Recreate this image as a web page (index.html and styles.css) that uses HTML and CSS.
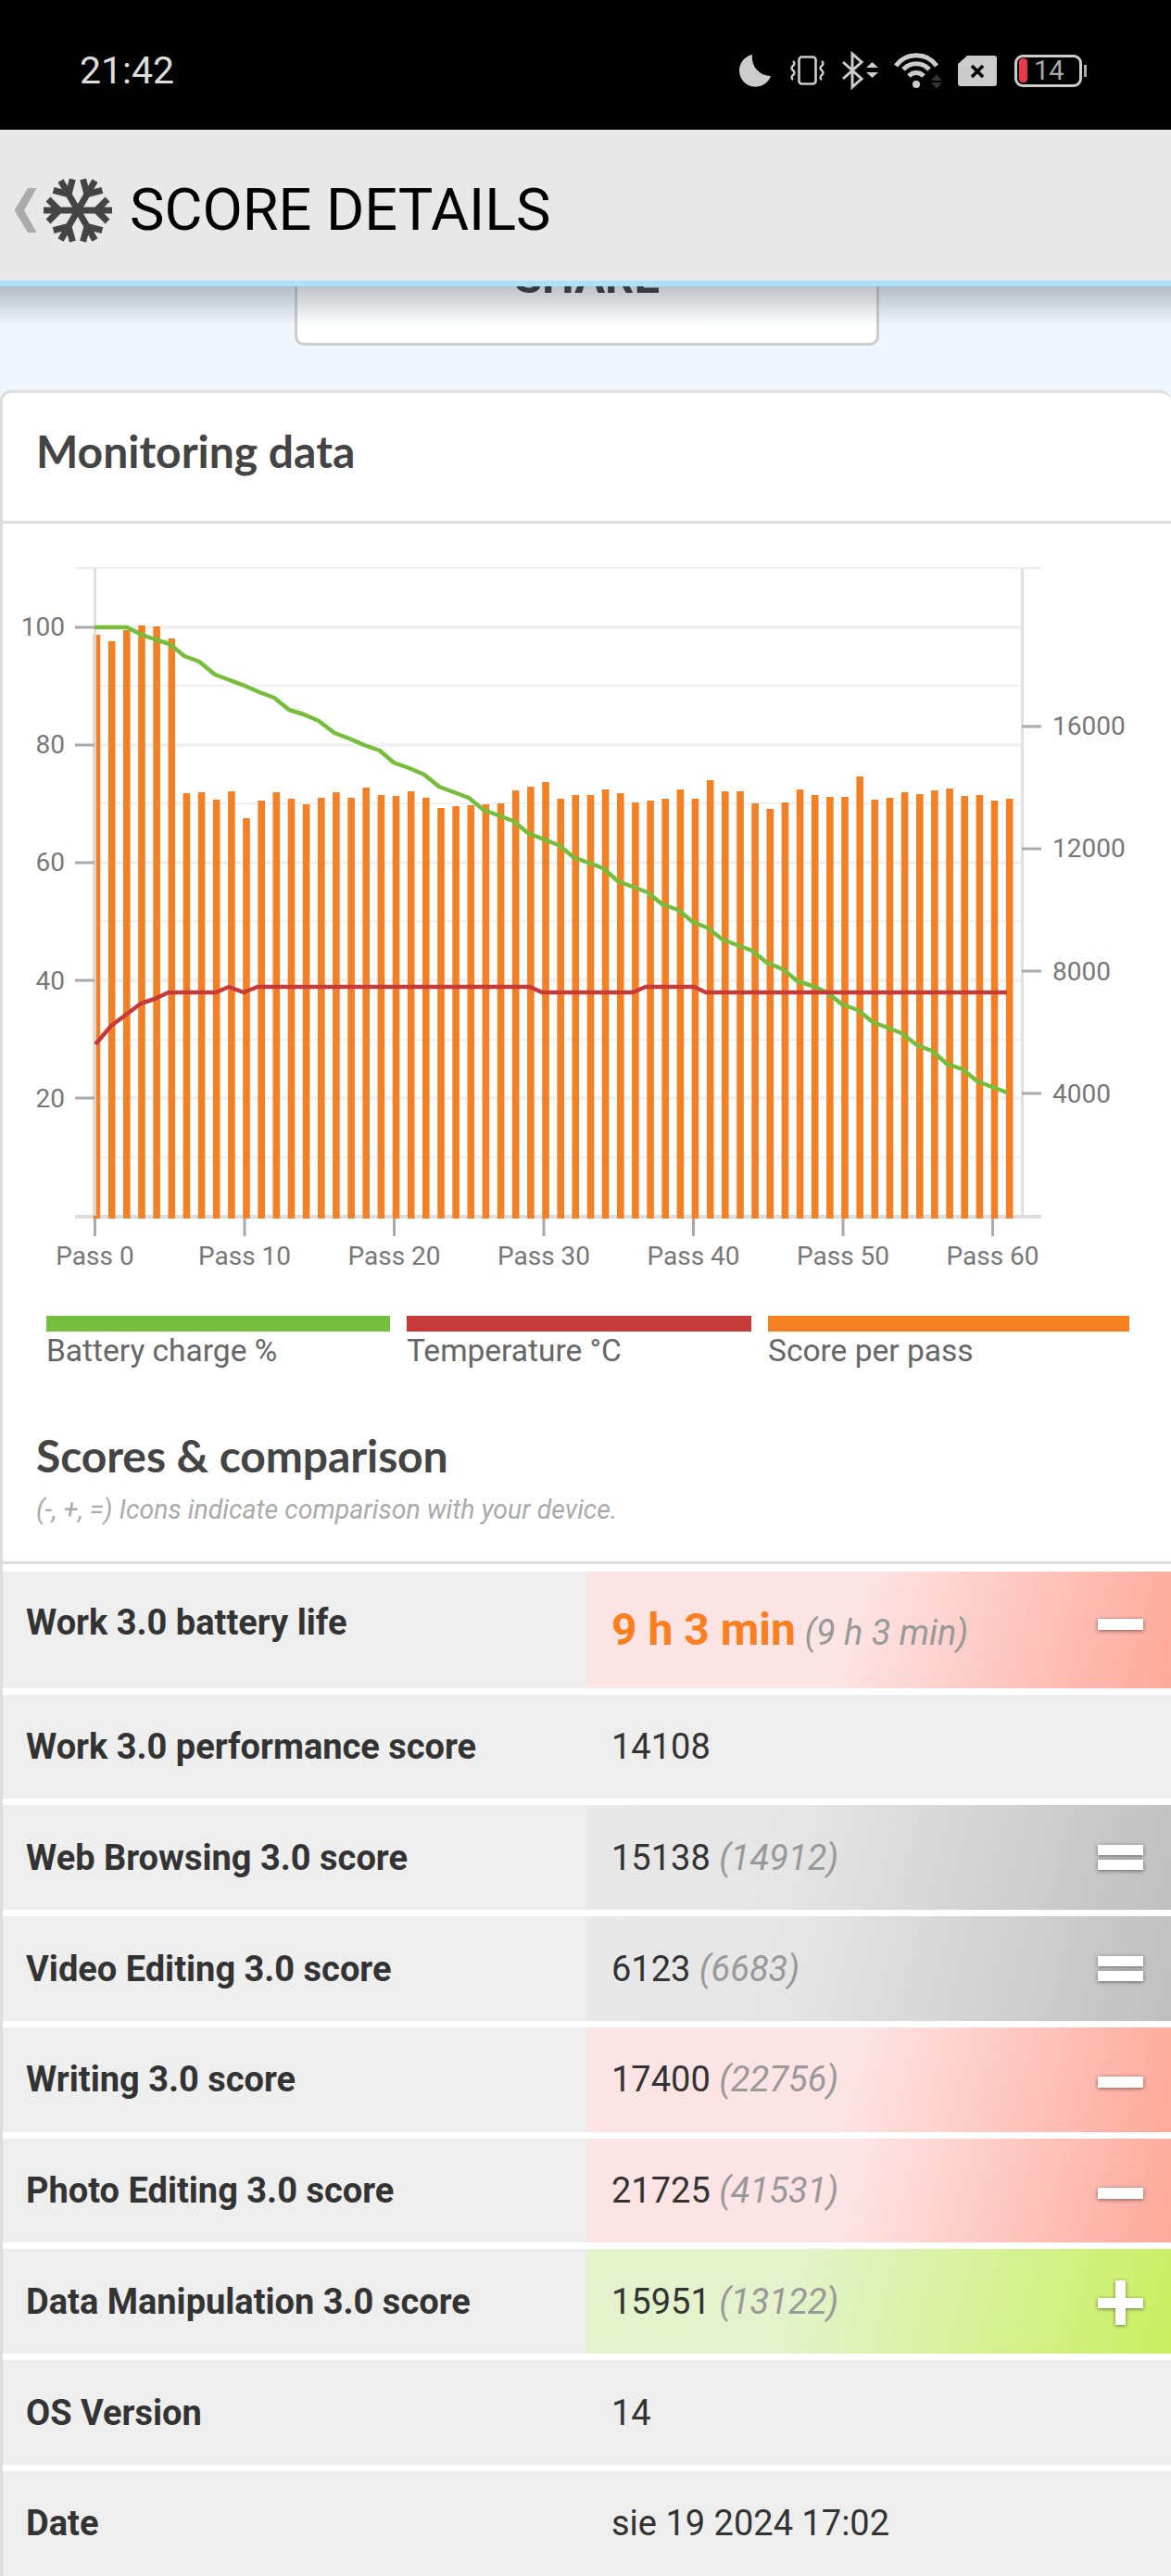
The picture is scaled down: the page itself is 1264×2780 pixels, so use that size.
FILE: index.html
```html
<!DOCTYPE html>
<html lang="en">
<head>
    <meta charset="UTF-8">
    <meta name="viewport" content="width=device-width, initial-scale=1.0">
    <title>Score details</title>
    <link rel="stylesheet" href="styles.css">
</head>
<body>
    <div class="status-bar">
        <span class="clock">21:42</span>
        <div class="status-icons">
            <svg width="37" height="34" viewBox="0 0 37 34"><path d="M15 0A17.5 17.5 0 1 0 35 23A20 20 0 0 1 15 0Z" fill="#ccc"/></svg>
            <svg width="37" height="32" viewBox="0 0 37 32"><rect x="9.5" y="1.5" width="18" height="29" rx="3" fill="none" stroke="#ccc" stroke-width="2.6"/><path d="M3 6q3 2.500 0 5q-3 2.500 0 5q3 2.500 0 5q-3 2.500 0 5M34 6q3 2.500 0 5q-3 2.500 0 5q3 2.500 0 5q-3 2.500 0 5" fill="none" stroke="#ccc" stroke-width="2.400"/></svg>
            <svg class="icon-bt" width="37" height="38" viewBox="0 0 37 38"><path d="M1 10L21 28L11 37V1L21 10L1 28" fill="none" stroke="#ccc" stroke-width="3"/><path d="M26 16L32.500 10L39 16ZM26 21H39L32.500 27Z" fill="#ccc"/></svg>
            <svg class="icon-wifi" width="50" height="39" viewBox="0 0 50 39"><path d="M2 14A27 27 0 0 1 46 14M10 18A19 19 0 0 1 38 18M16 25A11 11 0 0 1 32 25" fill="none" stroke="#ccc" stroke-width="5"/><circle cx="24" cy="34" r="4" fill="#ccc"/><path d="M40 30L46 23L52 30ZM40 32H52L46 39Z" fill="#333"/></svg>
            <svg width="42" height="33" viewBox="0 0 42 33"><path d="M10 0H39a3 3 0 0 1 3 3V30a3 3 0 0 1-3 3H3a3 3 0 0 1-3-3V9Z" fill="#ccc"/><path d="M15 11L27 23M27 11L15 23" stroke="#000" stroke-width="3.600"/></svg>
            <div class="battery"><span class="battery-level"></span><span class="battery-text">14</span></div>
        </div>
    </div>

    <header class="top-bar">
        <svg class="back" width="25" height="48" viewBox="0 0 25 48"><path d="M15 0H24.500L11 24L24.500 48H15L0.500 24Z" fill="#aaa"/></svg>
        <svg class="flake" width="80" height="74" viewBox="-40 -37 80 74">
            <g fill="none" stroke="#444" stroke-width="7">
                <path id="arm" d="M0 0H37M20 0L32-12M20 0L32 12"/>
                <use href="#arm" transform="rotate(60)"/>
                <use href="#arm" transform="rotate(120)"/>
                <use href="#arm" transform="rotate(180)"/>
                <use href="#arm" transform="rotate(240)"/>
                <use href="#arm" transform="rotate(300)"/>
            </g>
        </svg>
        <h1>SCORE DETAILS</h1>
    </header>

    <main class="content">
        <div class="header-shadow"></div>
        <div class="share-btn">SHARE</div>

        <section class="card">
            <h2 class="card-title">Monitoring data</h2>

            <!-- viewBox uses page coordinates, easier to read off the numbers -->
            <svg class="chart" width="1261" height="810" viewBox="3 565 1261 810">
                <path class="grid-minor" d="M102 613H1103M102 740H1103M102 867H1103M102 994H1103M102 1122H1103M102 1249H1103"/>
                <path class="grid-major" d="M102 677H1103M102 804H1103M102 931H1103M102 1058H1103M102 1185H1103"/>
                <path class="axis-base" d="M81 1313H1124"/>
                <path class="bars" d="M104.500 1315V685M120.700 1315V692M136.800 1315V680M153 1315V675M169.100 1315V676M185.300 1315V689M201.400 1315V856M217.600 1315V855M233.700 1315V863M249.900 1315V854M266 1315V883M282.200 1315V864M298.300 1315V855M314.500 1315V862M330.600 1315V868M346.800 1315V861M362.900 1315V855M379.100 1315V861M395.200 1315V850M411.400 1315V858M427.500 1315V859M443.700 1315V854M459.800 1315V861M476 1315V872M492.100 1315V870M508.300 1315V869M524.400 1315V868M540.600 1315V867M556.700 1315V853M572.900 1315V849M589 1315V844M605.200 1315V862M621.300 1315V858M637.500 1315V858M653.600 1315V852M669.800 1315V856M685.900 1315V866M702.100 1315V864M718.200 1315V862M734.400 1315V852M750.500 1315V862M766.700 1315V842M782.800 1315V854M799 1315V854M815.100 1315V867M831.300 1315V873M847.400 1315V866M863.600 1315V852M879.700 1315V858M895.900 1315V860M912 1315V860M928.200 1315V838M944.300 1315V863M960.500 1315V861M976.600 1315V855M992.800 1315V857M1008.900 1315V853M1025.100 1315V851M1041.200 1315V859M1057.400 1315V858M1073.500 1315V864M1089.700 1315V862"/>
                <path class="axis-line" d="M102.500 613V1312M1103.500 613V1312"/>
                <path class="axis-top" d="M81 613H102M1103 613H1124"/>
                <path class="ticks" d="M81 677H102M81 804H102M81 931H102M81 1058H102M81 1185H102M1103 784H1124M1103 916H1124M1103 1048H1124M1103 1180H1124M102.500 1315V1334M264 1315V1334M425.500 1315V1334M587 1315V1334M748.500 1315V1334M910 1315V1334M1071.500 1315V1334"/>
                <polyline class="line-battery" points="102,677 137,677 153,685 167,690 183,695 199,708 215,714 232,728 248,734 264,740 280,747 296,753 312,766 328,771 344,778 361,791 377,797 393,804 410,810 425,823 442,829 458,836 474,849 490,855 506,861 522,874 538,880 554,886 570,899 587,906 603,912 619,925 635,931 651,937 667,951 683,957 699,963 715,976 732,982 748,995 763,1001 780,1014 796,1020 812,1026 828,1039 845,1046 861,1059 877,1064 893,1071 909,1084 926,1090 942,1103 958,1109 973,1115 990,1128 1006,1134 1022,1148 1039,1154 1055,1167 1071,1173 1087,1179"/>
                <polyline class="line-temp" points="103,1127 120,1107 136,1095 152,1083 167,1078 182,1071 233,1071 247,1065 263,1071 278,1065 572,1065 585,1071 683,1071 697,1065 749,1065 762,1071 1087,1071"/>
                <g class="tick-left">
                    <text x="70" y="686">100</text>
                    <text x="70" y="813">80</text>
                    <text x="70" y="940">60</text>
                    <text x="70" y="1068">40</text>
                    <text x="70" y="1195">20</text>
                </g>
                <g class="tick-right">
                    <text x="1136" y="793">16000</text>
                    <text x="1136" y="925">12000</text>
                    <text x="1136" y="1058">8000</text>
                    <text x="1136" y="1190">4000</text>
                </g>
                <g class="tick-bottom">
                    <text x="102.500" y="1365">Pass 0</text>
                    <text x="264" y="1365">Pass 10</text>
                    <text x="425.500" y="1365">Pass 20</text>
                    <text x="587" y="1365">Pass 30</text>
                    <text x="748.500" y="1365">Pass 40</text>
                    <text x="910" y="1365">Pass 50</text>
                    <text x="1071.500" y="1365">Pass 60</text>
                </g>
            </svg>

            <div class="legend">
                <div><div class="swatch swatch-battery"></div><div class="legend-label">Battery charge %</div></div>
                <div><div class="swatch swatch-temp"></div><div class="legend-label">Temperature °C</div></div>
                <div><div class="swatch swatch-score"></div><div class="legend-label">Score per pass</div></div>
            </div>

            <div class="scores-head">
                <h2>Scores &amp; comparison</h2>
                <p>(-, +, =) Icons indicate comparison with your device.</p>
            </div>

            <div class="rows">
                <div class="row row-first">
                    <div class="row-label">Work 3.0 battery life</div>
                    <div class="row-value worse">
                        <span><span class="big-value">9 h 3 min</span> <em>(9 h 3 min)</em></span>
                        <svg class="sign" width="49" height="49" viewBox="0 0 49 49"><rect y="13" width="49" height="12"/></svg>
                    </div>
                </div>
                <div class="row">
                    <div class="row-label">Work 3.0 performance score</div>
                    <div class="row-value">14108</div>
                </div>
                <div class="row">
                    <div class="row-label">Web Browsing 3.0 score</div>
                    <div class="row-value same">
                        <span>15138 <em>(14912)</em></span>
                        <svg class="sign" width="49" height="49" viewBox="0 0 49 49"><rect y="11" width="49" height="11"/><rect y="27" width="49" height="11"/></svg>
                    </div>
                </div>
                <div class="row">
                    <div class="row-label">Video Editing 3.0 score</div>
                    <div class="row-value same">
                        <span>6123 <em>(6683)</em></span>
                        <svg class="sign" width="49" height="49" viewBox="0 0 49 49"><rect y="11" width="49" height="11"/><rect y="27" width="49" height="11"/></svg>
                    </div>
                </div>
                <div class="row">
                    <div class="row-label">Writing 3.0 score</div>
                    <div class="row-value worse">
                        <span>17400 <em>(22756)</em></span>
                        <svg class="sign" width="49" height="49" viewBox="0 0 49 49"><rect y="21" width="49" height="12"/></svg>
                    </div>
                </div>
                <div class="row">
                    <div class="row-label">Photo Editing 3.0 score</div>
                    <div class="row-value worse">
                        <span>21725 <em>(41531)</em></span>
                        <svg class="sign" width="49" height="49" viewBox="0 0 49 49"><rect y="21" width="49" height="12"/></svg>
                    </div>
                </div>
                <div class="row">
                    <div class="row-label">Data Manipulation 3.0 score</div>
                    <div class="row-value better">
                        <span>15951 <em>(13122)</em></span>
                        <svg class="sign" width="49" height="49" viewBox="0 0 49 49"><path d="M19 2H30V21H49V32H30V50H19V32H0V21H19Z"/></svg>
                    </div>
                </div>
                <div class="row">
                    <div class="row-label">OS Version</div>
                    <div class="row-value">14</div>
                </div>
                <div class="row">
                    <div class="row-label">Date</div>
                    <div class="row-value">sie 19 2024 17:02</div>
                </div>
            </div>
        </section>
    </main>
</body>
</html>
```

FILE: styles.css
```css
html, body {
    margin: 0;
    padding: 0;
}
body {
    width: 1264px;
    height: 2780px;
    overflow: hidden;
    font-family: Roboto, sans-serif;
    background-color: #eff6fd;
}

/* status bar */
.status-bar {
    height: 140px;
    background: #000;
    display: flex;
    align-items: center;
    justify-content: space-between;
    padding: 0 96px 0 86px;
    box-sizing: border-box;
}
.clock {
    color: #ddd;
    font-size: 41px;
    margin-top: 12px;
}
.status-icons {
    display: flex;
    align-items: center;
    gap: 19px;
    margin-top: 12px;
}
.status-icons svg {
    overflow: visible;
}
.battery {
    position: relative;
    display: flex;
    align-items: center;
    width: 73px;
    height: 35px;
    box-sizing: border-box;
    border: 3px solid #ccc;
    border-radius: 9px;
    padding-left: 2px;
}
.battery::after {
    content: "";
    position: absolute;
    right: -8px;
    top: 8px;
    width: 3px;
    height: 13px;
    background: #aaa;
}
.battery-level {
    width: 9px;
    height: 26px;
    border-radius: 4px;
    background: #e83a4a;
}
.battery-text {
    color: #aaa;
    font-size: 29px;
    line-height: 29px;
    margin-left: 7px;
}

/* top bar */
.top-bar {
    height: 169px;
    box-sizing: border-box;
    background: #e8e8e8;
    border-bottom: 6px solid #a8e2fb;
    display: flex;
    align-items: center;
    padding: 10px 0 0 15px;
}
.top-bar .back {
    margin-right: 4px;
}
.top-bar .flake {
    margin-right: 16px;
}
.top-bar h1 {
    margin: 0;
    font-size: 63px;
    font-weight: 400;
    color: #000;
    white-space: nowrap;
}

/* scrolled content under the bar */
.content {
    position: relative;
    height: 2471px;
    overflow: hidden;
}
.header-shadow {
    position: absolute;
    left: 0;
    right: 0;
    top: 0;
    height: 42px;
    background: linear-gradient(rgba(90, 100, 115, 0.4), rgba(90, 100, 115, 0));
    z-index: 2;
}
.share-btn {
    width: 631px;
    height: 140px;
    box-sizing: border-box;
    margin: -76px 0 0 318px;
    background: #fff;
    border: 3px solid #ccc;
    border-radius: 10px;
    text-align: center;
    font-size: 49px;
    font-weight: 700;
    color: #222;
    line-height: 42px;
    padding-top: 43px;
}

.card {
    margin-top: 48px;
    background: #fff;
    border: 3px solid #ddd;
    border-right: 0;
    border-radius: 12px 12px 0 0;
}
.card-title {
    margin: 0;
    height: 141px;
    box-sizing: border-box;
    padding: 33px 0 0 36px;
    border-bottom: 3px solid #ddd;
    font-family: Lato, sans-serif;
    font-size: 48px;
    line-height: 60px;
    font-weight: 700;
    color: #444;
}

/* chart */
.chart {
    display: block;
}
.chart path, .chart polyline {
    fill: none;
}
.grid-minor {
    stroke: #f1f1f1;
    stroke-width: 2.500;
}
.grid-major {
    stroke: #f0f0f0;
    stroke-width: 3.500;
}
.bars {
    stroke: #f38024;
    stroke-width: 7.600;
}
.axis-line {
    stroke: #ddd;
    stroke-opacity: 0.9;
    stroke-width: 3;
}
.axis-base {
    stroke: #ddd;
    stroke-width: 4;
}
.axis-top {
    stroke: #eee;
    stroke-width: 2.500;
}
.ticks {
    stroke: #aaa;
    stroke-width: 3;
}
.line-battery {
    stroke: #76bd3c;
    stroke-width: 4.500;
    stroke-linejoin: round;
}
.line-temp {
    stroke: #c83a3a;
    stroke-width: 4.500;
    stroke-linejoin: round;
}
.chart text {
    font-family: Roboto, sans-serif;
    font-size: 28px;
    fill: #777;
}
.tick-left text {
    text-anchor: end;
}
.tick-bottom text {
    text-anchor: middle;
}

/* legend */
.legend {
    display: grid;
    grid-template-columns: 371px 372px 390px;
    gap: 18px;
    padding: 45px 0 0 47px;
}
.swatch {
    height: 17px;
}
.swatch-battery {
    background: #76c03f;
}
.swatch-temp {
    background: #c83a3a;
}
.swatch-score {
    background: #f58020;
}
.legend-label {
    margin-top: 1px;
    font-size: 33.500px;
    line-height: 40px;
    color: #666;
}

/* scores */
.scores-head {
    padding: 63px 0 0 36px;
    height: 210px;
    box-sizing: border-box;
    border-bottom: 3px solid #ddd;
}
.scores-head h2 {
    margin: 0;
    font-family: Lato, sans-serif;
    font-size: 48px;
    line-height: 60px;
    font-weight: 700;
    letter-spacing: -0.1px;
    color: #444;
}
.scores-head p {
    margin: 9px 0 0;
    font-size: 28.500px;
    line-height: 40px;
    font-style: italic;
    color: #aaa;
}
.rows {
    display: flex;
    flex-direction: column;
    gap: 7px;
    padding-top: 8px;
}
.row {
    display: flex;
    height: 112.750px;
    background: #eee;
    font-size: 38px;
    color: #333;
}
.row-first {
    height: 125.700px;
}
.row-label {
    width: 630px;
    box-sizing: border-box;
    padding-left: 25px;
    display: flex;
    align-items: center;
    font-weight: 700;
}
.row-first .row-label {
    padding-bottom: 16px;
}
.row-value {
    flex: 1;
    box-sizing: border-box;
    display: flex;
    align-items: center;
    justify-content: space-between;
    padding: 0 30px 0 27px;
}
.row-value em {
    color: #999;
}
.big-value {
    color: #fb7f1f;
    font-size: 48px;
    font-weight: 700;
}
.worse {
    background: linear-gradient(105deg, #fde4e4 0%, #fde4e4 45%, #ffa899 100%);
}
.same {
    background: linear-gradient(105deg, #e8e8e8 0%, #e6e6e6 35%, #bfbfbf 100%);
}
.better {
    background: linear-gradient(105deg, #e4f3cc 0%, #e4f3cc 35%, #c8f060 100%);
}
.sign {
    fill: #fff;
    overflow: visible;
    filter: drop-shadow(0 1px 2px rgba(0, 0, 0, 0.5));
}
```
